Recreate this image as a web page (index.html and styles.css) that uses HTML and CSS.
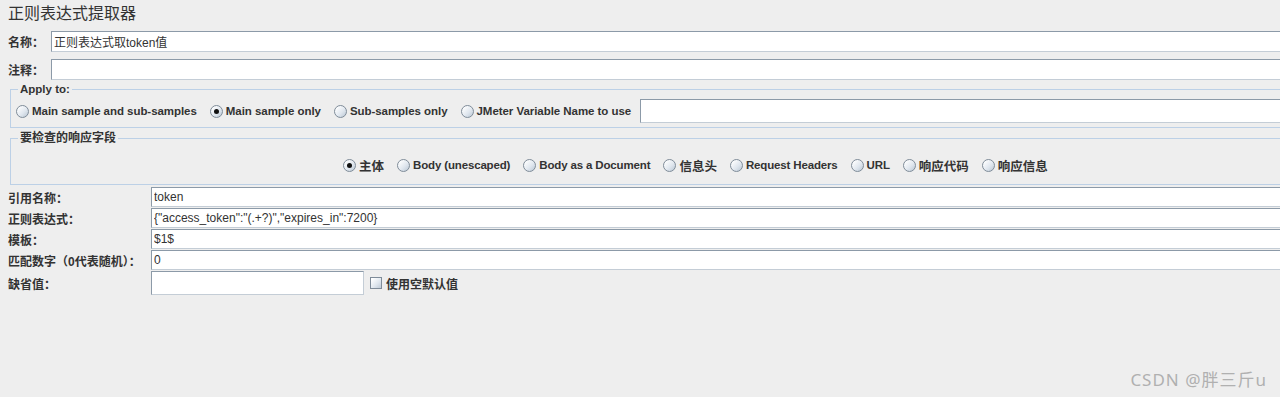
FILE: index.html
```html
<!DOCTYPE html>
<html lang="zh-CN">
<head>
  <meta charset="UTF-8">
  <meta name="viewport" content="width=device-width, initial-scale=1.0">
  <title>正则表达式提取器</title>
  <link rel="stylesheet" href="styles.css">
</head>
<body>
  <div class="panel">
    <h1 class="title">正则表达式提取器</h1>

    <div class="row row-top">
      <label class="label label-short">名称：</label>
      <input class="field" type="text" value="正则表达式取token值">
    </div>
    <div class="row row-top row-comment">
      <label class="label label-short">注释：</label>
      <input class="field" type="text" value="">
    </div>

    <fieldset class="group group-apply">
      <legend>Apply to:</legend>
      <div class="radios">
        <span class="radio-item"><span class="radio"></span>Main sample and sub-samples</span>
        <span class="radio-item"><span class="radio checked"></span>Main sample only</span>
        <span class="radio-item"><span class="radio"></span>Sub-samples only</span>
        <span class="radio-item"><span class="radio"></span>JMeter Variable Name to use</span>
        <input class="field field-var" type="text" value="">
      </div>
    </fieldset>

    <fieldset class="group group-field">
      <legend>要检查的响应字段</legend>
      <div class="radios radios-field">
        <span class="radio-item zh"><span class="radio checked"></span>主体</span>
        <span class="radio-item"><span class="radio"></span>Body (unescaped)</span>
        <span class="radio-item"><span class="radio"></span>Body as a Document</span>
        <span class="radio-item zh"><span class="radio"></span>信息头</span>
        <span class="radio-item"><span class="radio"></span>Request Headers</span>
        <span class="radio-item"><span class="radio"></span>URL</span>
        <span class="radio-item zh"><span class="radio"></span>响应代码</span>
        <span class="radio-item zh"><span class="radio"></span>响应信息</span>
      </div>
    </fieldset>

    <div class="settings">
      <div class="row">
        <label class="label">引用名称：</label>
        <input class="field field-small" type="text" value="token">
      </div>
      <div class="row">
        <label class="label">正则表达式：</label>
        <input class="field field-small" type="text" value='{"access_token":"(.+?)","expires_in":7200}'>
      </div>
      <div class="row">
        <label class="label">模板：</label>
        <input class="field field-small" type="text" value="$1$">
      </div>
      <div class="row">
        <label class="label">匹配数字（0代表随机）：</label>
        <input class="field field-small" type="text" value="0">
      </div>
      <div class="row row-default">
        <label class="label">缺省值：</label>
        <input class="field field-default" type="text" value="">
        <span class="check-item"><span class="checkbox"></span>使用空默认值</span>
      </div>
    </div>
  </div>

  <div class="watermark">CSDN @胖三斤u</div>
</body>
</html>
```

FILE: styles.css
```css
html, body {
  margin: 0;
  padding: 0;
  height: 100%;
  overflow: hidden;
}
body {
  background-color: #eeeeee;
  font-family: "Liberation Sans", "Noto Sans CJK SC", sans-serif;
  color: #333333;
  position: relative;
}
.panel {
  padding: 0 0 0 8px;
  margin-right: -20px;
}
.title {
  margin: 0;
  padding-top: 4px;
  height: 27px;
  font-size: 16px;
  line-height: 20px;
  font-weight: normal;
  color: #333333;
}

.row {
  display: flex;
  align-items: center;
  margin-bottom: 1px;
}
.row-top {
  margin-bottom: 0;
}
.row-comment {
  margin-top: 7px;
}
.label {
  width: 143px;
  flex: none;
  font-size: 12px;
  font-weight: bold;
  color: #333333;
}
.label-short {
  width: 43px;
}

.field {
  flex: 1;
  box-sizing: border-box;
  height: 21px;
  margin: 0;
  padding: 0 2px;
  border: 1px solid;
  border-color: #8c9aa8 #c4cdd6 #c4cdd6 #8c9aa8;
  background: #ffffff;
  font-family: "Liberation Sans", "Noto Sans CJK SC", sans-serif;
  font-size: 12px;
  color: #333333;
  outline: none;
}
.field-small {
  height: 20px;
}
.field-var {
  height: 24px;
}
.field-default {
  flex: none;
  width: 213px;
  height: 24px;
}

.group {
  margin: 0 0 0 2px;
  padding: 0 0 0 5px;
  border: 1px solid #bcd0e6;
  min-width: 0;
}
.group legend {
  margin-left: 2px;
  padding: 0 2px 0 2px;
  font-size: 11.5px;
  font-weight: bold;
  line-height: 14px;
  color: #333333;
}
.group-apply {
  margin-top: 2px;
  padding-top: 3px;
  padding-bottom: 4px;
}
.group-field {
  margin-top: 3px;
  padding-top: 12px;
  padding-bottom: 11px;
}
.group-field legend {
  font-size: 12px;
}

.radios {
  display: flex;
  align-items: center;
}
.radios-field {
  height: 16px;
  padding-left: 327px;
}
.radio-item {
  display: flex;
  align-items: center;
  margin-right: 13px;
  font-size: 11.5px;
  letter-spacing: -0.05px;
  font-weight: bold;
  white-space: nowrap;
  color: #333333;
}
.radio-item:nth-child(4) {
  margin-right: 9px;
}
.radios-field .radio-item {
  letter-spacing: -0.15px;
}
.radios-field .radio-item:nth-child(4) {
  margin-right: 13px;
}
.radios-field .radio-item.zh {
  font-size: 12.5px;
  letter-spacing: 0;
}
.radio {
  position: relative;
  width: 11px;
  height: 11px;
  margin-right: 3px;
  border: 1px solid #7f8c99;
  border-radius: 50%;
  background: linear-gradient(135deg, #ffffff 10%, #dfe6ee 60%, #b9c6d3 100%);
  flex: none;
}
.radio.checked::after {
  content: "";
  position: absolute;
  left: 3px;
  top: 3px;
  width: 5px;
  height: 5px;
  border-radius: 50%;
  background: #111111;
}

.settings {
  margin-top: 2px;
}
.row-default {
  margin-top: 1px;
}
.check-item {
  display: flex;
  align-items: center;
  margin-left: 6px;
  font-size: 12px;
  font-weight: bold;
  color: #333333;
}
.checkbox {
  width: 10px;
  height: 10px;
  margin-right: 4px;
  border: 1px solid #7f8c99;
  background: linear-gradient(135deg, #ffffff 10%, #dfe6ee 60%, #bfcad6 100%);
}

.watermark {
  position: absolute;
  right: 13px;
  bottom: 6px;
  font-family: "Noto Sans", "Noto Sans CJK SC", sans-serif;
  font-size: 17px;
  letter-spacing: 1px;
  color: #b0b0b0;
}
```
